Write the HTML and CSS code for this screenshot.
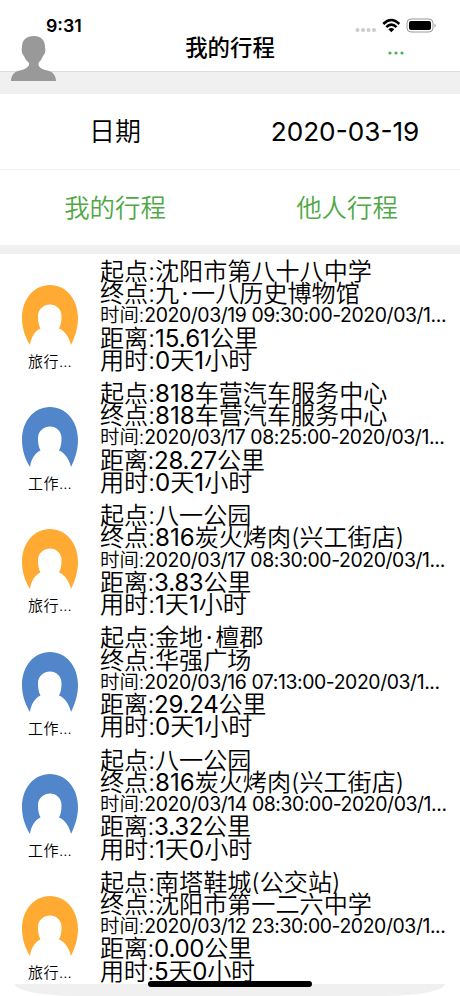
FILE: index.html
```html
<!DOCTYPE html>
<html lang="zh-CN">

<head>
    <meta charset="UTF-8">
    <meta name="viewport" content="width=device-width, initial-scale=1.0">
    <title>我的行程</title>
    <link rel="stylesheet" href="styles.css">
</head>

<body>
    <!-- avatar shape shared by every trip -->
    <svg class="defs">
        <symbol id="person" viewBox="0 0 56 60">
            <path fill="currentColor" d="M8 60C3 52 0 43 0 33C0 14 12 0 28 0S56 14 56 33C56 43 53 52 49 60C47 52 43 46 37 43.500C39 40 39.500 36 39.500 31C39.500 24 34 19.500 28 19.500S16 24 16 31C16 36 16.500 40 18.500 43.500C13 46 9 52 8 60Z" />
        </symbol>
    </svg>

    <header class="header">
        <div class="time">9:31</div>
        <svg class="user" viewBox="0 0 45 45">
            <path fill="#999" d="M23 0C30 0 34 4 34 11C35 15 34 18 32 20C31 23 29 25 27.500 27V29C28 32 33 34 38 35C42 36 45 40 45 45H0C0 40 3 36 7 35C12 34 17 32 18 29V27C16 25 14 23 13 20C11 18 10 15 11 11C11 4 15 0 23 0Z" />
        </svg>
        <h1 class="title">我的行程</h1>
        <svg class="status" viewBox="0 0 82 18">
            <g fill="#ccc">
                <circle cx="2.500" cy="12" r="2" />
                <circle cx="8" cy="12" r="2" />
                <circle cx="13.500" cy="12" r="2" />
                <circle cx="19" cy="12" r="2" />
            </g>
            <g fill="none" stroke="#000" stroke-width="2.600">
                <path d="M28.300 6Q36 -2 44.300 6" />
                <path d="M31.300 9.200Q36.300 4 41.500 9.200" />
            </g>
            <path d="M33.300 11.300Q36.300 8.800 39.300 11.300L36.300 14.200Z" />
            <rect x="52" y="1" width="26" height="13" rx="4" fill="none" stroke="#999" />
            <rect x="54" y="3" width="22" height="9" rx="2" />
            <path fill="#999" d="M79.500 5.500Q82 7.500 79.500 9.500Z" />
        </svg>
        <svg class="more" viewBox="0 0 16 4">
            <circle cx="2" cy="2" r="1.600" />
            <circle cx="8" cy="2" r="1.600" />
            <circle cx="14" cy="2" r="1.600" />
        </svg>
    </header>

    <div class="date">
        <div>日期</div>
        <div class="day">2020-03-19</div>
    </div>
    <div class="tabs">
        <div>我的行程</div>
        <div class="other">他人行程</div>
    </div>

    <div class="list">
        <div class="trip">
            <div class="type travel"><svg><use href="#person" /></svg><span>旅行…</span></div>
            <div class="info">
                <p>起点:沈阳市第八十八中学</p>
                <p>终点:九<span class="dot">·</span>一八历史博物馆</p>
                <p class="when">时间:<span>2020/03/19 09:30:00-2020/03/1...</span></p>
                <p>距离:<span>15.61</span>公里</p>
                <p>用时:<span>0</span>天<span>1</span>小时</p>
            </div>
        </div>
        <div class="trip">
            <div class="type work"><svg><use href="#person" /></svg><span>工作…</span></div>
            <div class="info">
                <p>起点:<span>818</span>车营汽车服务中心</p>
                <p>终点:<span>818</span>车营汽车服务中心</p>
                <p class="when">时间:<span>2020/03/17 08:25:00-2020/03/1...</span></p>
                <p class="distance">距离:<span>28.27</span>公里</p>
                <p>用时:<span>0</span>天<span>1</span>小时</p>
            </div>
        </div>
        <div class="trip">
            <div class="type travel"><svg><use href="#person" /></svg><span>旅行…</span></div>
            <div class="info">
                <p>起点:八一公园</p>
                <p>终点:<span>816</span>炭火烤肉(兴工街店)</p>
                <p class="when">时间:<span>2020/03/17 08:30:00-2020/03/1...</span></p>
                <p class="distance">距离:<span>3.83</span>公里</p>
                <p>用时:<span>1</span>天<span>1</span>小时</p>
            </div>
        </div>
        <div class="trip">
            <div class="type work"><svg><use href="#person" /></svg><span>工作…</span></div>
            <div class="info">
                <p>起点:金地<span class="dot">·</span>檀郡</p>
                <p>终点:华强广场</p>
                <p class="when">时间:<span>2020/03/16 07:13:00-2020/03/1...</span></p>
                <p class="distance">距离:<span>29.24</span>公里</p>
                <p>用时:<span>0</span>天<span>1</span>小时</p>
            </div>
        </div>
        <div class="trip">
            <div class="type work"><svg><use href="#person" /></svg><span>工作…</span></div>
            <div class="info">
                <p>起点:八一公园</p>
                <p>终点:<span>816</span>炭火烤肉(兴工街店)</p>
                <p class="when">时间:<span>2020/03/14 08:30:00-2020/03/1...</span></p>
                <p class="distance">距离:<span>3.32</span>公里</p>
                <p>用时:<span>1</span>天<span>0</span>小时</p>
            </div>
        </div>
        <div class="trip">
            <div class="type travel"><svg><use href="#person" /></svg><span>旅行…</span></div>
            <div class="info">
                <p>起点:南塔鞋城(公交站)</p>
                <p>终点:沈阳市第一二六中学</p>
                <p class="when">时间:<span>2020/03/12 23:30:00-2020/03/1...</span></p>
                <p class="distance">距离:<span>0.00</span>公里</p>
                <p class="distance">用时:<span>5</span>天<span>0</span>小时</p>
            </div>
        </div>
    </div>

    <div class="footer"></div>
    <div class="home"></div>
</body>

</html>
```
FILE: styles.css
```css
* {
    box-sizing: border-box;
    margin: 0;
    padding: 0;
}

body {
    position: relative;
    width: 460px;
    height: 996px;
    overflow: hidden;
    background: #fff;
    color: #000;
    font-family: Inter, "Noto Sans CJK SC", sans-serif;
}

.defs {
    position: absolute;
    width: 0;
    height: 0;
}

.header {
    position: relative;
    height: 94px;
    padding-top: 35px;
    background: linear-gradient(#fff 71px, #dcdcdc 71px, #dcdcdc 72px, #f0f0f0 72px);
}

.time {
    position: absolute;
    left: 46px;
    top: 15px;
    font-size: 17.8px;
    font-weight: 600;
    line-height: 22px;
}

.user {
    position: absolute;
    left: 11px;
    top: 36px;
    width: 45px;
    height: 45px;
}

.title {
    font-size: 22.4px;
    font-weight: 500;
    line-height: 26px;
    text-align: center;
}

.status {
    position: absolute;
    left: 355px;
    top: 18px;
    width: 82px;
    height: 18px;
}

.more {
    position: absolute;
    left: 388px;
    top: 51px;
    width: 16px;
    height: 4px;
    fill: #4caf50;
}

.date,
.tabs {
    display: grid;
    grid-template-columns: 1fr 1fr;
    align-items: center;
    height: 75px;
    padding-top: 1px;
    font-size: 26px;
    font-weight: 350;
    line-height: 30px;
    text-align: center;
}

.day {
    font-size: 26.2px;
    font-weight: 400;
}

.tabs {
    height: 76px;
    border-top: 1px solid #f2f2f2;
    color: #4fa845;
    font-size: 25.4px;
}

.other {
    padding-left: 4px;
}

.list {
    height: 739px;
    border-top: 9px solid #f0f0f0;
    overflow: hidden;
}

.trip {
    display: flex;
    height: 122.2px;
    padding-top: 6.8px;
}

.type {
    display: flex;
    flex-direction: column;
    align-items: center;
    width: 100px;
    padding-top: 24.2px;
    font-size: 15px;
    font-weight: 350;
    line-height: 20px;
    letter-spacing: 0.5px;
}

.type svg {
    width: 56px;
    height: 60px;
    margin-bottom: 7px;
}

.travel svg {
    color: #ffab33;
}

.work svg {
    color: #5186ca;
}

.info {
    font-size: 24.1px;
    font-weight: 350;
    line-height: 22.25px;
    white-space: nowrap;
}

.info span {
    font-weight: 400;
}

.info .when {
    padding-bottom: 1px;
    font-size: 19.4px;
    line-height: 21.25px;
}

.when span {
    letter-spacing: -0.41px;
}

.info .distance {
    letter-spacing: -0.3px;
}

.dot {
    display: inline-block;
    width: 12px;
    text-align: center;
}

.footer {
    height: 12px;
    margin: 0 15px;
    background: #f0f0f0;
    border-radius: 0 0 60px 60px / 0 0 12px 12px;
}

.home {
    position: absolute;
    left: 148px;
    top: 981px;
    width: 164px;
    height: 6px;
    border-radius: 3px;
    background: #000;
}
```
